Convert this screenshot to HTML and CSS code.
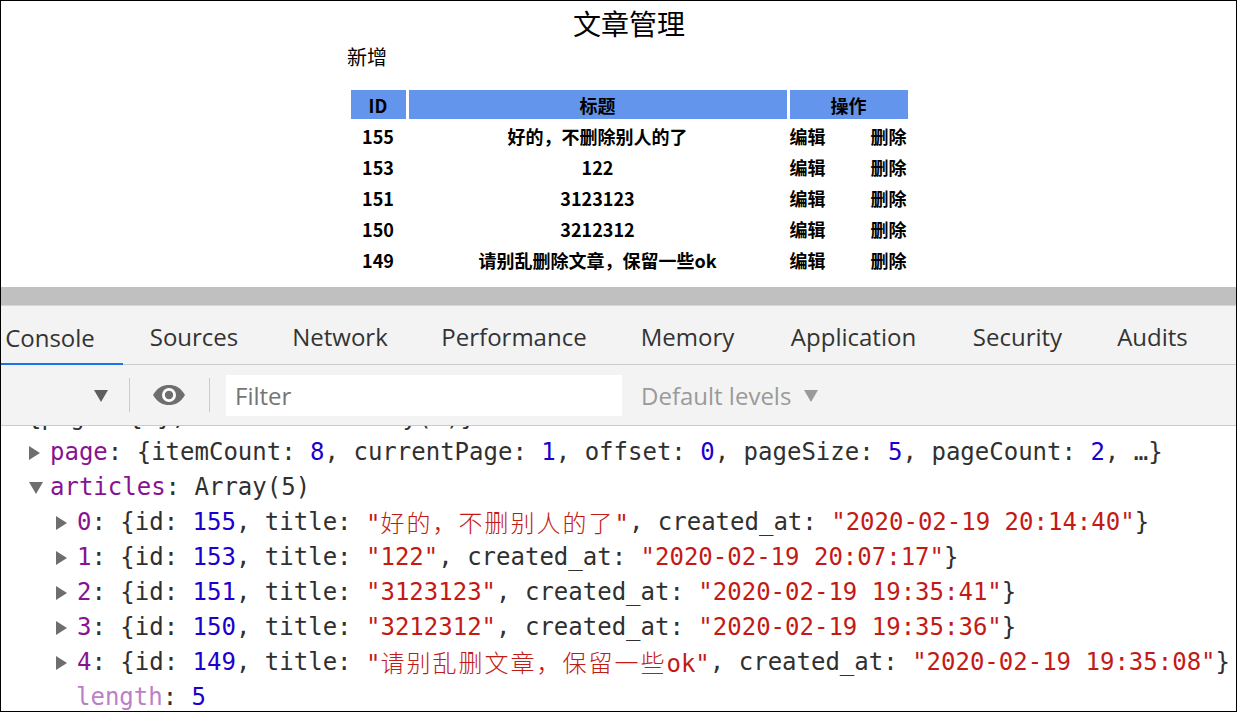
FILE: index.html
```html
<!DOCTYPE html>
<html lang="zh-CN">
<head>
<meta charset="utf-8">
<title>文章管理</title>
<link rel="stylesheet" href="styles.css">
</head>
<body>
<div class="frame">
  <section class="page">
    <h1 class="title">文章管理</h1>
    <div class="add">新增</div>
    <div class="table">
      <div class="th">ID</div><div class="th">标题</div><div class="th">操作</div>
      <div class="td">155</div><div class="td">好的，不删除别人的了</div><div class="td ops"><span>编辑</span><span>删除</span></div>
      <div class="td">153</div><div class="td">122</div><div class="td ops"><span>编辑</span><span>删除</span></div>
      <div class="td">151</div><div class="td">3123123</div><div class="td ops"><span>编辑</span><span>删除</span></div>
      <div class="td">150</div><div class="td">3212312</div><div class="td ops"><span>编辑</span><span>删除</span></div>
      <div class="td">149</div><div class="td">请别乱删除文章，保留一些ok</div><div class="td ops"><span>编辑</span><span>删除</span></div>
    </div>
  </section>
  <div class="splitter"></div>
  <div class="devtools">
    <div class="tabs">
      <div class="tab active w-console">Console</div>
      <div class="tab w-sources">Sources</div>
      <div class="tab w-network">Network</div>
      <div class="tab w-performance">Performance</div>
      <div class="tab w-memory">Memory</div>
      <div class="tab w-application">Application</div>
      <div class="tab w-security">Security</div>
      <div class="tab w-audits">Audits</div>
    </div>
    <div class="toolbar">
      <span class="caret"></span>
      <span class="sep"></span>
      <svg class="eye" width="34" height="20" viewBox="0 0 34 20"><path d="M1 10 C6 2 11 0 17 0 C23 0 28 2 33 10 C28 18 23 20 17 20 C11 20 6 18 1 10 Z" fill="#6e6e6e"/><circle cx="17" cy="10" r="7" fill="#fff"/><circle cx="17" cy="10" r="4.2" fill="#6e6e6e"/></svg>
      <span class="sep sep2"></span>
      <div class="filter">Filter</div>
      <div class="levels">Default levels <span class="lv-caret"></span></div>
    </div>
    <div class="console">
      <div class="lines">
        <div class="line l0">{page: {…}, articles: Array(5)}<span class="badge">i</span></div>
        <div class="line l1"><span class="tri"></span><span class="key">page</span>: {itemCount: <span class="num">8</span>, currentPage: <span class="num">1</span>, offset: <span class="num">0</span>, pageSize: <span class="num">5</span>, pageCount: <span class="num">2</span>, …}</div>
        <div class="line l1"><span class="tri open"></span><span class="key">articles</span>: Array(5)</div>
        <div class="line l2"><span class="tri"></span><span class="key">0</span>: {id: <span class="num">155</span>, title: <span class="str">"<span class="cjk">好的，不删别人的了</span>"</span>, created_at: <span class="str">"2020-02-19 20:14:40"</span>}</div>
        <div class="line l2"><span class="tri"></span><span class="key">1</span>: {id: <span class="num">153</span>, title: <span class="str">"122"</span>, created_at: <span class="str">"2020-02-19 20:07:17"</span>}</div>
        <div class="line l2"><span class="tri"></span><span class="key">2</span>: {id: <span class="num">151</span>, title: <span class="str">"3123123"</span>, created_at: <span class="str">"2020-02-19 19:35:41"</span>}</div>
        <div class="line l2"><span class="tri"></span><span class="key">3</span>: {id: <span class="num">150</span>, title: <span class="str">"3212312"</span>, created_at: <span class="str">"2020-02-19 19:35:36"</span>}</div>
        <div class="line l2"><span class="tri"></span><span class="key">4</span>: {id: <span class="num">149</span>, title: <span class="str">"<span class="cjk">请别乱删文章，保留一些</span>ok"</span>, created_at: <span class="str">"2020-02-19 19:35:08"</span>}</div>
        <div class="line l3"><span class="key dim">length</span>: <span class="num">5</span></div>
      </div>
    </div>
  </div>
</div>
</body>
</html>
```
FILE: styles.css
```css
html, body {
  margin: 0;
  padding: 0;
  background: #fff;
}
.frame {
  width: 1237px;
  height: 712px;
  box-sizing: border-box;
  border: 1px solid #000;
  overflow: hidden;
  display: flex;
  flex-direction: column;
}
.page {
  height: 286px;
  flex: none;
  padding-left: 21px;
  box-sizing: border-box;
  font-family: "Noto Sans CJK SC", "Noto Sans", sans-serif;
  color: #000;
}
.title {
  margin: 0;
  padding-top: 2px;
  font-size: 28px;
  font-weight: normal;
  line-height: 40px;
  text-align: center;
}
.add {
  font-size: 20px;
  line-height: 28px;
  margin-left: 325px;
}
.table {
  margin-top: 19px;
  display: grid;
  grid-template-columns: 55px 378px 118px;
  grid-auto-rows: 29px;
  column-gap: 3px;
  row-gap: 2px;
  justify-content: center;
  font-size: 18px;
  font-weight: bold;
}
.th {
  background: #6495ed;
  display: flex;
  align-items: center;
  justify-content: center;
}
.td {
  display: flex;
  align-items: center;
  justify-content: center;
}
.td.ops {
  justify-content: space-between;
  padding: 0 1px 0 0;
}
.splitter {
  height: 18px;
  flex: none;
  background: #c0c0c0;
}
.devtools {
  flex: 1;
  display: flex;
  flex-direction: column;
  min-height: 0;
}
.tabs {
  flex: none;
  height: 58px;
  border-top: 1px solid #d6d6d6;
  border-bottom: 1px solid #cbcbcb;
  background: #f3f3f3;
  display: flex;
  margin-left: -24px;
  font-family: "Open Sans", "Noto Sans", sans-serif;
  font-size: 24px;
  color: #333;
}
.tab {
  flex: none;
  display: flex;
  align-items: center;
  justify-content: center;
  padding-top: 3px;
  box-sizing: border-box;
}
.tab.active {
  box-shadow: inset 0 -2px 0 #1a73e8;
  margin-bottom: -1px;
  height: 59px;
}
.w-console { width: 146px; }
.w-sources { width: 142px; }
.w-network { width: 150px; }
.w-performance { width: 198px; }
.w-memory { width: 149px; }
.w-application { width: 183px; }
.w-security { width: 145px; }
.w-audits { width: 125px; }
.toolbar {
  flex: none;
  height: 60px;
  background: #f3f3f3;
  border-bottom: 1px solid #cbcbcb;
  display: flex;
  align-items: center;
  padding-left: 93px;
  font-family: "Open Sans", "Noto Sans", sans-serif;
  font-size: 24px;
}
.caret {
  width: 0;
  height: 0;
  border-left: 7px solid transparent;
  border-right: 7px solid transparent;
  border-top: 12px solid #5f5f5f;
  margin-top: 2px;
}
.sep {
  width: 1px;
  height: 34px;
  background: #cccccc;
  margin-left: 21px;
}
.eye {
  margin-left: 22px;
}
.sep2 {
  margin-left: 23px;
}
.filter {
  margin-left: 16px;
  width: 396px;
  height: 41px;
  box-sizing: border-box;
  background: #fff;
  padding-left: 9px;
  display: flex;
  align-items: center;
  color: #757575;
}
.levels {
  margin-left: 19px;
  color: #9a9a9a;
  display: flex;
  align-items: center;
}
.lv-caret {
  width: 0;
  height: 0;
  border-left: 7px solid transparent;
  border-right: 7px solid transparent;
  border-top: 12px solid #9a9a9a;
  margin-left: 13px;
  margin-top: 2px;
}
.console {
  flex: 1;
  background: #fff;
  overflow: hidden;
  font-family: "DejaVu Sans Mono", "Liberation Mono", monospace;
  font-size: 24px;
  color: #303030;
}
.lines {
  margin-top: -26px;
}
.line {
  height: 35px;
  line-height: 35px;
  white-space: pre;
  display: flex;
  align-items: center;
}
.l0 { padding-left: 26px; }
.l1 { padding-left: 28px; }
.l2 { padding-left: 55px; }
.l3 { padding-left: 75px; }
.tri {
  flex: none;
  width: 0;
  height: 0;
  border-top: 7px solid transparent;
  border-bottom: 7px solid transparent;
  border-left: 11px solid #6e6e6e;
  margin-right: 10px;
}
.tri.open {
  border-left: 7px solid transparent;
  border-right: 7px solid transparent;
  border-top: 12px solid #6e6e6e;
  border-bottom: 0;
  margin-right: 7px;
}
.key { color: #881391; }
.key.dim { color: #bb7fc8; }
.num { color: #1c00cf; }
.str { color: #c41a16; }
.cjk {
  font-family: "Noto Sans CJK SC", sans-serif;
  font-weight: 300;
  letter-spacing: 2px;
}
.badge {
  display: inline-block;
  width: 20px;
  height: 16px;
  border-radius: 3px;
  background: #aac4f5;
  margin-left: 9px;
  color: #fff;
  font-size: 12px;
  line-height: 16px;
  text-align: center;
}
```
